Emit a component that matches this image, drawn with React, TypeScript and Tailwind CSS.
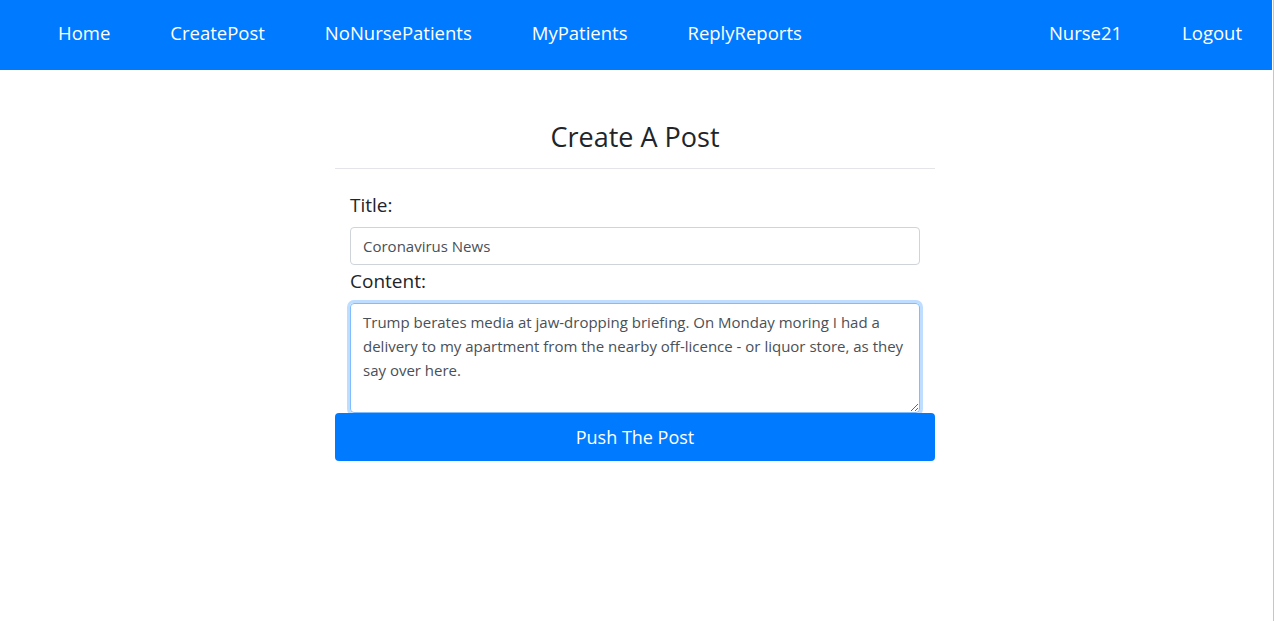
import { useEffect, useRef } from "react";

const TEXT =
  "Trump berates media at jaw-dropping briefing. On Monday moring I had a\ndelivery to my apartment from the nearby off-licence - or liquor store, as they\nsay over here.";

export default function App() {
  const ref = useRef<HTMLTextAreaElement>(null);
  useEffect(() => {
    const el = ref.current;
    if (el) {
      el.focus();
      el.setSelectionRange(TEXT.length, TEXT.length);
    }
  }, []);
  const font = { fontFamily: '"Segoe UI", "Open Sans", "Noto Sans", sans-serif' };
  return (
    <div className="w-full min-h-[621px] bg-white flex" style={font}>
      <div className="w-[1272px] shrink-0">
        <nav className="h-[70px] bg-[#007bff] flex items-center pb-[4px] pl-[28px] text-white text-[18.5px]">
          <ul className="flex items-center">
            {["Home", "CreatePost", "NoNursePatients", "MyPatients", "ReplyReports"].map((t) => (
              <li key={t} className="px-[30px]">
                <a href="#">{t}</a>
              </li>
            ))}
          </ul>
          <ul className="ml-auto flex items-center">
            {["Nurse21", "Logout"].map((t) => (
              <li key={t} className="px-[30px]">
                <a href="#">{t}</a>
              </li>
            ))}
          </ul>
        </nav>
        <main className="w-[600px] mx-auto -translate-x-[1px]">
          <h3 className="pt-[49px] pb-[13px] text-center text-[27px] leading-[36px] text-[#212529] border-b border-[#e3e5e8]">
            Create A Post
          </h3>
          <form className="px-[15px] pt-[21px]" onSubmit={(e) => e.preventDefault()}>
            <label className="block text-[19px] leading-[30px] text-[#212529]">Title:</label>
            <input
              className="mt-[7px] block w-full h-[38px] border border-[#ced4da] rounded-[4px] px-[12px] text-[15px] text-[#495057] outline-none"
              defaultValue="Coronavirus News"
            />
            <label className="mt-[1px] block text-[19px] leading-[30px] text-[#212529]">Content:</label>
            <textarea
              ref={ref}
              className="mt-[7px] block w-full h-[110px] border border-[#80bdff] rounded-[4px] px-[12px] py-[6px] text-[15px] leading-[24px] text-[#495057] outline-none shadow-[0_0_0_3px_rgba(0,123,255,0.25)]"
              defaultValue={TEXT}
            />
          </form>
          <button className="block w-full h-[48px] bg-[#007bff] text-white text-[18px] rounded-[4px]">
            Push The Post
          </button>
        </main>
      </div>
      <div className="w-[1px] shrink-0" />
      <div className="w-[1px] shrink-0 bg-[#c6c6c6]" />
    </div>
  );
}
